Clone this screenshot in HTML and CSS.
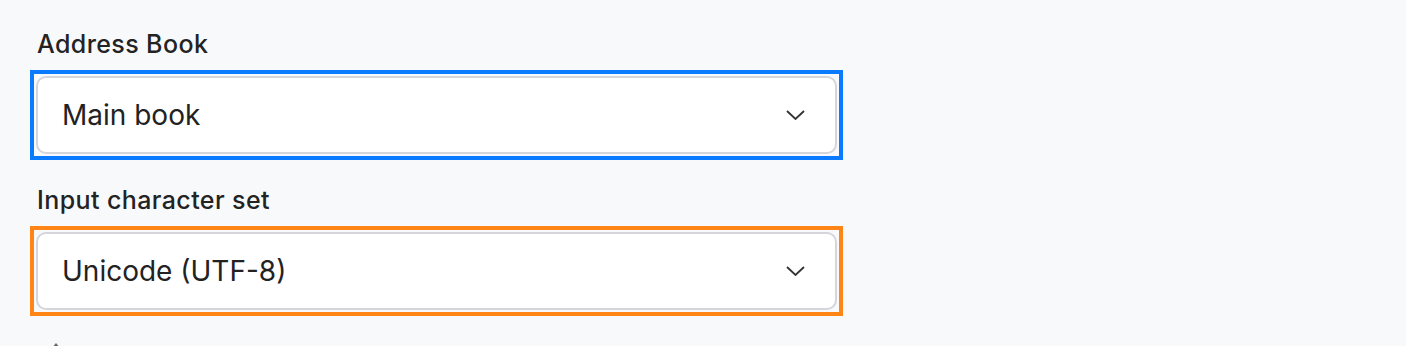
FILE: index.html
```html
<!DOCTYPE html>
<html lang="en">
<head>
<meta charset="utf-8">
<title>Settings</title>
<link rel="stylesheet" href="styles.css">
</head>
<body>
<main class="form">
  <div class="field">
    <label class="label">Address Book</label>
    <div class="focus-ring blue">
      <div class="select">
        <span class="value">Main book</span>
        <svg class="chevron" width="19" height="10" viewBox="0 0 19 10"><path d="M1 1 L9.5 9 L18 1" fill="none" stroke="#333" stroke-width="1.8"/></svg>
      </div>
    </div>
  </div>
  <div class="field">
    <label class="label">Input character set</label>
    <div class="focus-ring orange">
      <div class="select">
        <span class="value">Unicode (UTF-8)</span>
        <svg class="chevron" width="19" height="10" viewBox="0 0 19 10"><path d="M1 1 L9.5 9 L18 1" fill="none" stroke="#333" stroke-width="1.8"/></svg>
      </div>
    </div>
  </div>
  <div class="next">
    <span class="tip"></span>
  </div>
</main>
</body>
</html>
```

FILE: styles.css
```css
html, body {
  margin: 0;
  padding: 0;
  background: #f8f9fb;
  overflow: hidden;
}
body {
  font-family: Inter, "Noto Sans", sans-serif;
  color: #222;
  height: 346px;
}
.form {
  padding: 26px 0 0 30px;
  width: 813px;
  display: flex;
  flex-direction: column;
  gap: 22px;
}
.field {
  display: flex;
  flex-direction: column;
  gap: 8px;
}
.label {
  font-size: 25px;
  line-height: 36px;
  font-weight: 500;
  letter-spacing: 0.4px;
  padding-left: 7px;
  color: #232323;
}
.focus-ring {
  border: 4px solid;
  padding: 2px;
  box-sizing: border-box;
  width: 813px;
}
.blue { border-color: #0a7bff; }
.orange { border-color: #ff8616; }
.select {
  height: 78px;
  box-sizing: border-box;
  background: #fff;
  border: 2px solid #d4d6dc;
  border-radius: 10px;
  display: flex;
  align-items: center;
  justify-content: space-between;
  padding: 0 30px 0 24px;
}
.value {
  font-size: 28px;
  color: #222;
}
.chevron { display: block; }
.next {
  position: relative;
  height: 20px;
}
.tip {
  position: absolute;
  left: 22px;
  top: 5px;
  width: 0;
  height: 0;
  border-left: 4px solid transparent;
  border-right: 4px solid transparent;
  border-bottom: 5px solid #666;
}
```
